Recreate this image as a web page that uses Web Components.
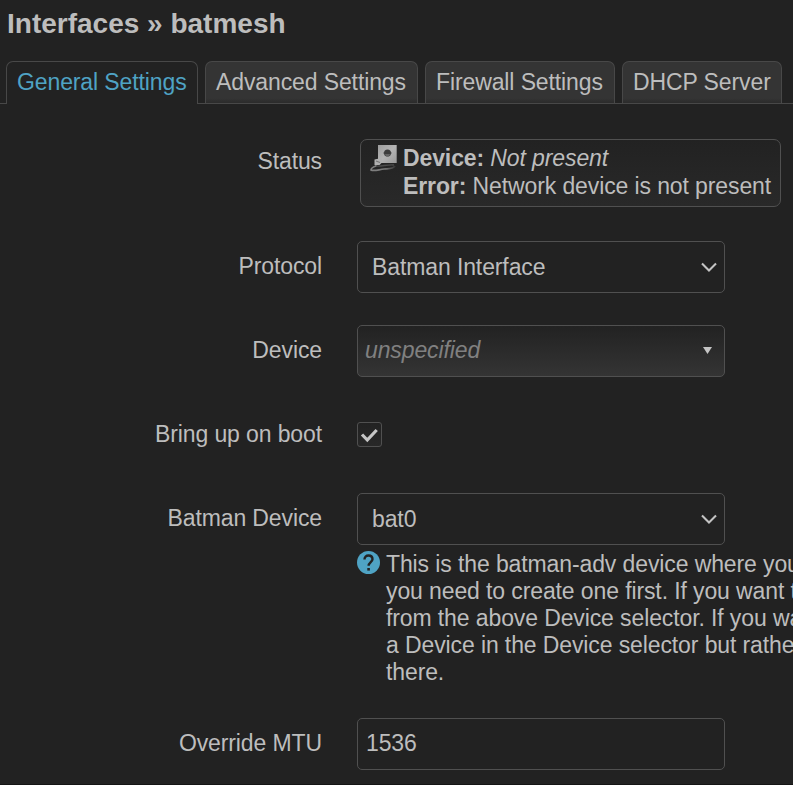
<!DOCTYPE html>
<html lang="en">
<head>
<meta charset="utf-8">
<title>Interfaces » batmesh</title>
<style>
html, body { margin: 0; height: 785px; overflow: hidden; background: #222; }
body { font: 23px/27px "Liberation Sans", Arial, sans-serif; letter-spacing: -0.11px; color: #bdbdbd; --line: #505050; --accent: #4fa3c4; }
</style>
</head>
<body>
<interface-dialog></interface-dialog>
<script>
function define(name, html) {
  const template = document.createElement('template');
  template.innerHTML = html;
  customElements.define(name, class extends HTMLElement {
    constructor() {
      super();
      this.attachShadow({ mode: 'open' }).append(template.content.cloneNode(true));
    }
  });
}

define('tab-item', `
<style>
:host { display: block; box-sizing: border-box; height: 42px; border: 1px solid #484848; border-bottom: 0; border-radius: 7px 7px 0 0; padding: 7px 0 0 10px; line-height: 27px; white-space: nowrap; background: linear-gradient(#343434 0 88%, #2b2b2b); }
:host([active]) { height: 43px; background: #222; color: var(--accent); border-color: #484848; }
</style><slot></slot>`);

define('tab-bar', `
<style>
:host { display: flex; gap: 7px; padding-left: 6px; height: 42px; box-shadow: 0 1px #484848; }
</style><slot></slot>`);

define('form-row', `
<style>
:host { display: grid; grid-template-columns: 322px auto; column-gap: 35px; padding: 16px 0; box-sizing: border-box; }
.label { text-align: right; padding-top: var(--label-top, 12px); white-space: nowrap; }
</style>
<div class="label"><slot name="label"></slot></div>
<div><slot></slot></div>`);

define('status-badge', `
<style>
:host { display: flex; box-sizing: border-box; width: 421px; height: 68px; margin-left: 3px; border: 1px solid var(--line); border-radius: 7px; background: linear-gradient(#222, #292929); padding: 4px 0 0 9px; line-height: 28px; white-space: nowrap; }
svg { display: block; width: 28px; height: 28px; margin-right: 5px; flex: none; }
</style>
<svg viewBox="0 0 28 28">
  <defs>
    <linearGradient id="plate" x1="0" y1="0" x2="1" y2="1"><stop stop-color="#9c9c9c"/><stop offset=".5" stop-color="#b4b4b4"/><stop offset="1" stop-color="#999"/></linearGradient>
    <linearGradient id="cable"><stop stop-color="#808080"/><stop offset=".6" stop-color="#777"/><stop offset="1" stop-color="#383838"/></linearGradient>
  </defs>
  <path d="M8 1h18.7v18H8z" fill="url(#plate)"/>
  <path d="M13 9h9" stroke="#8c8c8c" stroke-width="2"/>
  <circle cx="17.5" cy="9" r="3.5" fill="#3c3c3c"/><path d="M15 10h5l-1 2.5h-3z" fill="#646464"/>
  <path d="M7 19c-1 1-1 2-1 3-3 1-5 2-5 4 3 1.5 8-.5 13-1 6-.5 9 0 11-3" fill="none" stroke="url(#cable)" stroke-width="1.7"/>
  <path d="M6 22c5 1 12-2 18-1" fill="none" stroke="#4c4c4c" stroke-width="1.4"/>
  <path d="M4.5 15.5l7-1.5 1 4-3 3-5 0z" fill="#b0b0b0"/><path d="M6 17l4 1.5" stroke="#747474" stroke-width="1.2"/>
</svg><div><slot></slot></div>`);

define('select-field', `
<style>
:host { display: flex; align-items: center; justify-content: space-between; box-sizing: border-box; width: 368px; height: 52px; border: 1px solid var(--line); border-radius: 5px; padding: 1px 7px 0 14px; white-space: nowrap; }
svg { display: block; margin-bottom: 2px; }
</style><slot></slot>
<svg width="16" height="10" viewBox="0 0 16 10"><path d="M1 1.5L8 8.5l7-7" fill="none" stroke="#c4c4c4" stroke-width="2.1"/></svg>`);

define('combo-field', `
<style>
:host { display: flex; align-items: center; justify-content: space-between; box-sizing: border-box; width: 368px; height: 52px; border: 1px solid var(--line); border-radius: 5px; padding: 0 12px 2px 7px; background: linear-gradient(#222, #343434); color: #808080; font-style: italic; }
svg { display: block; }
</style><slot></slot>
<svg width="9" height="7" viewBox="0 0 9 7"><path d="M0 0h9L4.5 7z" fill="#c4c4c4"/></svg>`);

define('text-field', `
<style>
:host { display: flex; align-items: center; box-sizing: border-box; width: 368px; height: 52px; border: 1px solid var(--line); border-radius: 5px; padding: 0 8px 2px; }
</style><slot></slot>`);

define('check-box', `
<style>
:host { display: block; box-sizing: border-box; width: 25px; height: 25px; margin: 13px 0 14px; border: 1px solid var(--line); border-radius: 3px; background: linear-gradient(#222, #282828); }
svg { display: block; }
</style>
<svg width="23" height="23" viewBox="0 0 23 23"><path d="M4 11.5l5.3 5.5L18.7 7" fill="none" stroke="#c6c6c6" stroke-width="3.2"/></svg>`);

define('help-text', `
<style>
:host { display: flex; gap: 6px; margin-top: 6px; white-space: nowrap; }
svg { display: block; flex: none; }
</style>
<svg width="23" height="23" viewBox="0 0 23 23"><circle cx="11.5" cy="11.5" r="11.5" fill="var(--accent)"/><path d="M7.5 8.5c0-2.5 1.6-4 4-4s4 1.5 4 3.7c0 2.7-3.9 3.1-3.9 6.600" fill="none" stroke="#222" stroke-width="2.4"/><path d="M10.3 17h2.6v2.600h-2.6z" fill="#222"/></svg>
<div><slot></slot></div>`);

define('interface-dialog', `
<style>
:host { display: block; width: 793px; height: 784px; overflow: hidden; border-bottom: 1px solid #151515; }
h1 { margin: 0; font-size: 28px; line-height: 32px; letter-spacing: 0; padding: 8px 0 21px 7px; height: 32px; white-space: nowrap; }
.form { padding-top: 20px; }
</style>
<h1>Interfaces » batmesh</h1>
<tab-bar>
  <tab-item active style="width:192px">General Settings</tab-item>
  <tab-item style="width:213px">Advanced Settings</tab-item>
  <tab-item style="width:190px">Firewall Settings</tab-item>
  <tab-item style="width:160px">DHCP Server</tab-item>
</tab-bar>
<div class="form">
  <form-row style="--label-top:9px;height:102px"><span slot="label">Status</span><status-badge><b>Device:</b> <i>Not present</i><br><b>Error:</b> Network device is not present</status-badge></form-row>
  <form-row><span slot="label">Protocol</span><select-field>Batman Interface</select-field></form-row>
  <form-row><span slot="label">Device</span><combo-field>unspecified</combo-field></form-row>
  <form-row><span slot="label">Bring up on boot</span><check-box></check-box></form-row>
  <form-row><span slot="label">Batman Device</span><select-field>bat0</select-field><help-text>This is the batman-adv device where you<br>you need to create one first. If you want t<br>from the above Device selector. If you wa<br>a Device in the Device selector but rathe<br>there.</help-text></form-row>
  <form-row><span slot="label">Override MTU</span><text-field>1536</text-field></form-row>
</div>`);
</script>
</body>
</html>
